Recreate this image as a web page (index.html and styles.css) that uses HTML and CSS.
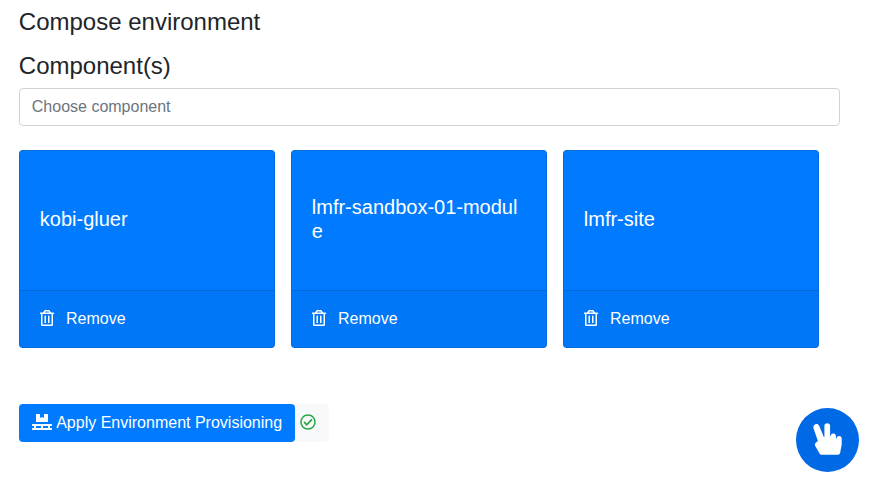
FILE: index.html
```html
<!DOCTYPE html>
<html lang="en">
<head>
<meta charset="utf-8">
<title>Compose environment</title>
<link rel="stylesheet" href="styles.css">
</head>
<body>
<svg class="defs" width="0" height="0">
  <symbol id="trash" viewBox="0 0 448 512"><path d="M268 416h24a12 12 0 0 0 12-12V188a12 12 0 0 0-12-12h-24a12 12 0 0 0-12 12v216a12 12 0 0 0 12 12zM432 80h-82.41l-34-56.7A48 48 0 0 0 274.41 0H173.59a48 48 0 0 0-41.16 23.3L98.41 80H16A16 16 0 0 0 0 96v16a16 16 0 0 0 16 16h16v336a48 48 0 0 0 48 48h288a48 48 0 0 0 48-48V128h16a16 16 0 0 0 16-16V96a16 16 0 0 0-16-16zM171.84 50.91A6 6 0 0 1 177 48h94a6 6 0 0 1 5.15 2.91L293.61 80H154.39zM368 464H80V128h288zm-212-48h24a12 12 0 0 0 12-12V188a12 12 0 0 0-12-12h-24a12 12 0 0 0-12 12v216a12 12 0 0 0 12 12z"/></symbol>
</svg>
<main class="page">
  <h4 class="heading">Compose environment</h4>
  <h4 class="heading section-heading">Component(s)</h4>
  <input class="form-control" type="text" placeholder="Choose component">
  <div class="card-deck">
    <div class="card">
      <div class="card-body"><h5 class="card-title">kobi-gluer</h5></div>
      <div class="card-footer"><svg class="icon-trash"><use href="#trash"/></svg><span>Remove</span></div>
    </div>
    <div class="card">
      <div class="card-body"><h5 class="card-title">lmfr-sandbox-01-module</h5></div>
      <div class="card-footer"><svg class="icon-trash"><use href="#trash"/></svg><span>Remove</span></div>
    </div>
    <div class="card">
      <div class="card-body"><h5 class="card-title">lmfr-site</h5></div>
      <div class="card-footer"><svg class="icon-trash"><use href="#trash"/></svg><span>Remove</span></div>
    </div>
  </div>
  <div class="actions">
    <button class="btn" type="button"><svg class="icon-pallet" viewBox="0 0 640 512"><path d="M144 256h352c8.8 0 16-7.2 16-16V16c0-8.800-7.200-16-16-16H384v128l-64-32-64 32V0H144c-8.800 0-16 7.200-16 16v224c0 8.800 7.200 16 16 16zm480 128c8.800 0 16-7.200 16-16v-32c0-8.800-7.200-16-16-16H16c-8.800 0-16 7.200-16 16v32c0 8.800 7.200 16 16 16h48v64H16c-8.800 0-16 7.200-16 16v32c0 8.800 7.200 16 16 16h608c8.800 0 16-7.200 16-16v-32c0-8.800-7.200-16-16-16h-48v-64h48zm-336 64H128v-64h160v64zm224 0H352v-64h160v64z"/></svg><span>Apply Environment Provisioning</span></button>
    <span class="status"><svg class="icon-check" viewBox="0 0 512 512"><path d="M256 8C119.033 8 8 119.033 8 256s111.033 248 248 248 248-111.033 248-248S392.967 8 256 8zm0 48c110.532 0 200 89.451 200 200 0 110.532-89.451 200-200 200-110.532 0-200-89.451-200-200 0-110.532 89.451-200 200-200m140.204 130.267l-22.536-22.718c-4.667-4.705-12.265-4.736-16.97-.068L215.346 303.697l-59.792-60.277c-4.667-4.705-12.265-4.736-16.97-.069l-22.719 22.536c-4.705 4.667-4.736 12.265-.068 16.971l90.781 91.516c4.667 4.705 12.265 4.736 16.97.068l172.589-171.204c4.704-4.668 4.734-12.266.067-16.971z"/></svg></span>
  </div>
</main>
<button class="fab" type="button"><svg class="icon-hand" viewBox="0 0 29 32"><path d="M11.400 14V3.100a2.850 2.850 0 0 1 5.700 0V13h.6a2.600 2.600 0 0 1 5.200 0v2.600h.6a2.600 2.600 0 0 1 5.200 0V21c0 2.500-1 4.700-1.400 8.300-.2 1.600-1 2.400-2.400 2.400H9c-1.200 0-2-.5-2.600-1.500L2.500 23.400c-1-1.600-.8-2.900.4-3.900l2-1.600L.5 5.200c-1.200-3.700 3.900-6.100 5.700-2.400L10.800 14z"/></svg></button>
</body>
</html>
```
FILE: styles.css
```css
*, *::before, *::after { box-sizing: border-box; }
html, body { height: 100%; }
body {
  margin: 0;
  overflow: hidden;
  background: #fff;
  color: #212529;
  font: 400 16px/1.5 "Liberation Sans", Arial, sans-serif;
}
svg { display: block; flex: none; fill: currentColor; }
.defs { position: absolute; }
.page { padding: 7px 30px 0 18.8px; }
.heading { margin: 0; font-size: 24px; font-weight: 400; line-height: 29px; }
.section-heading { margin-top: 15px; margin-bottom: 8px; }
.form-control {
  display: block;
  width: 821px;
  height: 38px;
  margin: 0;
  padding: 6px 12px;
  border: 1px solid #ced4da;
  border-radius: 4px;
  background: #fff;
  font: inherit;
}
.form-control::placeholder { color: #6c757d; opacity: 1; }
.card-deck { display: flex; gap: 16px; margin-top: 24px; }
.card {
  display: flex;
  flex-direction: column;
  width: 256px;
  height: 198px;
  border: 1px solid rgba(0, 0, 0, 0.125);
  border-radius: 4px;
  background: #007bff;
  color: #fff;
  overflow: hidden;
}
.card-body { flex: 1; display: flex; align-items: center; padding: 0 20px 4px; }
.card-title { margin: 0; min-width: 0; font-size: 20px; font-weight: 400; line-height: 24px; word-break: break-all; }
.card-footer {
  display: flex;
  align-items: center;
  gap: 12.4px;
  height: 57px;
  padding: 0 20px;
  border-top: 1px solid rgba(0, 0, 0, 0.125);
  background: rgba(0, 0, 0, 0.03);
}
.icon-trash { width: 14px; height: 16px; margin: 0 0 2px -0.2px; }
.actions { display: flex; margin-top: 56px; }
.btn {
  display: flex;
  align-items: center;
  gap: 4.4px;
  height: 38px;
  padding: 0 12.8px 0 13px;
  border: 0;
  border-radius: 4px;
  background: #007bff;
  color: #fff;
  font: inherit;
  white-space: nowrap;
}
.icon-pallet { width: 20px; height: 16px; margin-bottom: 2px; }
.status {
  display: flex;
  align-items: center;
  width: 34px;
  height: 38px;
  padding-left: 5px;
  border-radius: 0 4px 4px 0;
  background: #f8f9fa;
  color: #28a745;
}
.icon-check { width: 16px; height: 16px; margin-bottom: 2px; }
.fab {
  position: fixed;
  right: 11px;
  bottom: 10px;
  display: flex;
  align-items: center;
  justify-content: center;
  width: 63px;
  height: 64px;
  padding: 0 0 3px;
  border: 0;
  border-radius: 50%;
  background: #0069e6;
  color: #fff;
}
.icon-hand { width: 29px; height: 32px; }
```
